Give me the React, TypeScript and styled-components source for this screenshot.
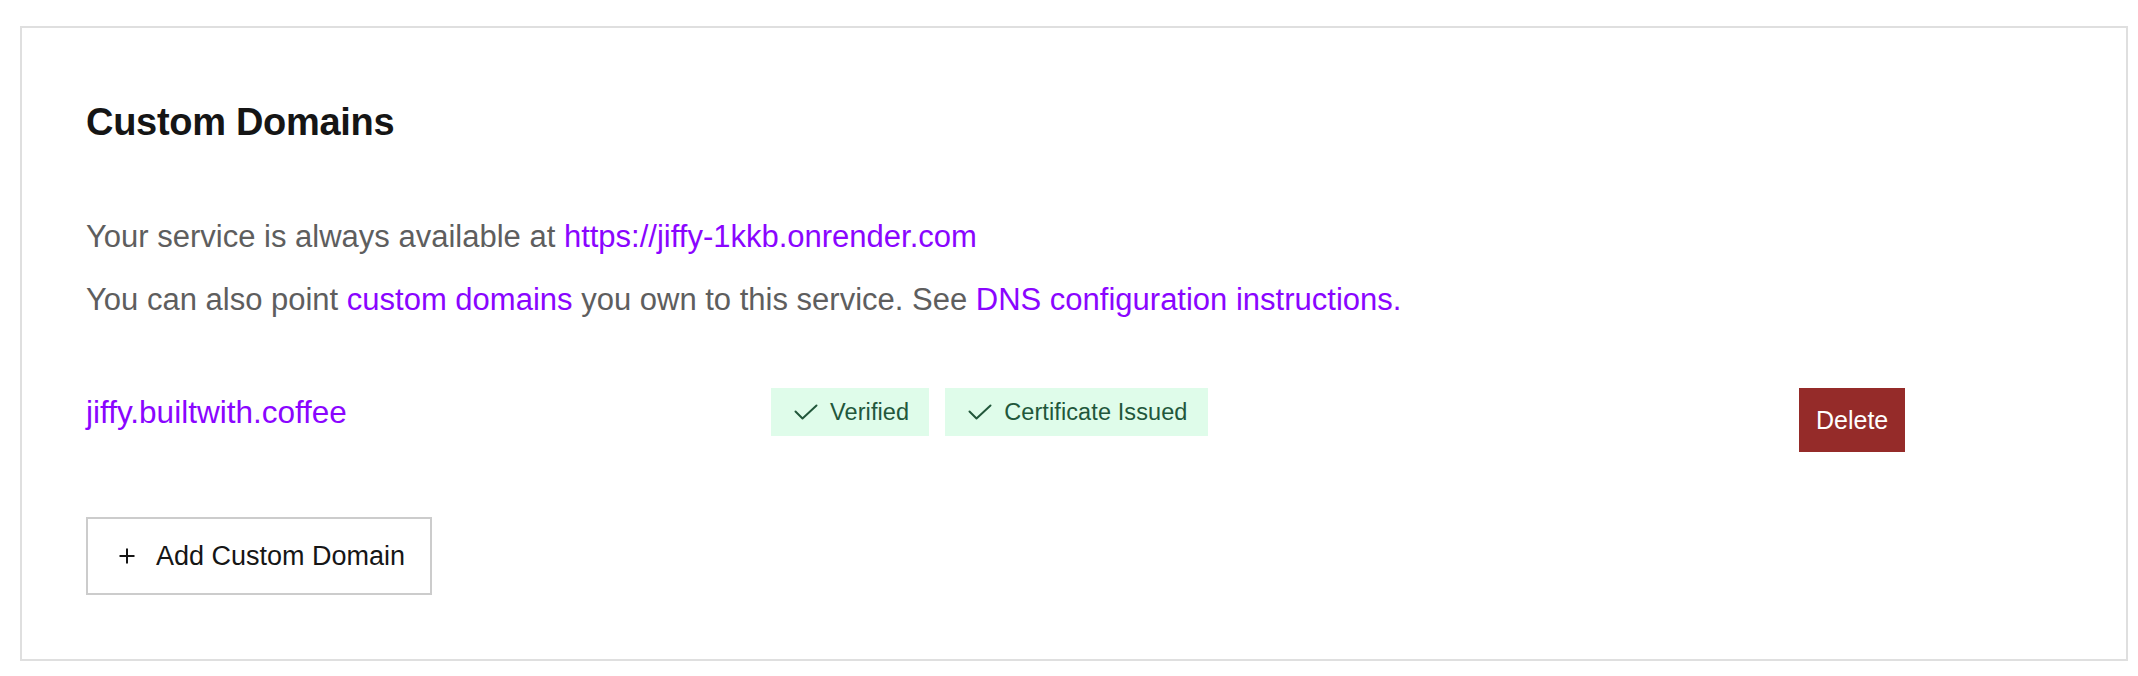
import React from "react";
import styled, { createGlobalStyle } from "styled-components";

const GlobalStyle = createGlobalStyle`
  html, body {
    margin: 0;
    padding: 0;
    background: #ffffff;
  }
  body {
    font-family: "Liberation Sans", Arial, Helvetica, sans-serif;
  }
  * { box-sizing: border-box; }
`;

const Page = styled.div`
  padding: 26px 10px 0 20px;
  width: 2138px;
`;

const Card = styled.section`
  border: 2px solid #dfdfdf;
  padding: 64px;
  background: #ffffff;
`;

const Title = styled.h2`
  margin: 0 0 62px 0;
  font-size: 38px;
  line-height: 60px;
  font-weight: 700;
  letter-spacing: -0.3px;
  color: #151515;
`;

const Paragraph = styled.p<{ $gap?: number }>`
  margin: 0 0 ${(p) => p.$gap ?? 0}px 0;
  font-size: 31px;
  line-height: 45px;
  color: #5e5e5e;
`;

const Link = styled.a`
  color: #8a05ff;
  text-decoration: none;
`;

const DomainRow = styled.div`
  display: grid;
  grid-template-columns: 685px 1028px auto;
  align-items: start;
  margin: 66px 0 65px 0;
`;

const DomainName = styled.a`
  font-size: 31.5px;
  line-height: 48px;
  color: #8a05ff;
  text-decoration: none;
`;

const Badges = styled.div`
  display: flex;
  gap: 16px;
`;

const Badge = styled.span`
  display: inline-flex;
  align-items: center;
  height: 48px;
  padding: 0 20px 0 23px;
  gap: 12px;
  background: #dffcea;
  color: #22573b;
  font-size: 23.5px;
  letter-spacing: 0.1px;
`;

const DeleteButton = styled.button`
  height: 64px;
  padding: 0 17px;
  border: none;
  background: #952b29;
  color: #ffffff;
  font-family: inherit;
  font-size: 25px;
  cursor: pointer;
`;

const AddButton = styled.button`
  display: inline-flex;
  align-items: center;
  gap: 21px;
  height: 78px;
  padding: 0 25px 0 31px;
  border: 2px solid #cccccc;
  background: #ffffff;
  color: #161616;
  font-family: inherit;
  font-size: 27px;
  cursor: pointer;
`;

const CheckIcon = () => (
  <svg width="24" height="16" viewBox="0 0 24 16" fill="none">
    <path d="M1.5 7.5 L8.5 14.5 L22.5 1.5" stroke="#22573b" strokeWidth="2" strokeLinecap="round" strokeLinejoin="round" />
  </svg>
);

const PlusIcon = () => (
  <svg width="16" height="16" viewBox="0 0 16 16" fill="none">
    <path d="M8 0.5 V15.5 M0.5 8 H15.5" stroke="#161616" strokeWidth="2" />
  </svg>
);

export default function App() {
  return (
    <>
      <GlobalStyle />
      <Page>
        <Card>
          <Title>Custom Domains</Title>
          <Paragraph $gap={18}>
            Your service is always available at{" "}
            <Link href="#">https://jiffy-1kkb.onrender.com</Link>
          </Paragraph>
          <Paragraph>
            You can also point <Link href="#">custom domains</Link> you own to this service. See{" "}
            <Link href="#">DNS configuration instructions.</Link>
          </Paragraph>
          <DomainRow>
            <div>
              <DomainName href="#">jiffy.builtwith.coffee</DomainName>
            </div>
            <Badges>
              <Badge>
                <CheckIcon />
                Verified
              </Badge>
              <Badge>
                <CheckIcon />
                Certificate Issued
              </Badge>
            </Badges>
            <div>
              <DeleteButton>Delete</DeleteButton>
            </div>
          </DomainRow>
          <AddButton>
            <PlusIcon />
            Add Custom Domain
          </AddButton>
        </Card>
      </Page>
    </>
  );
}
